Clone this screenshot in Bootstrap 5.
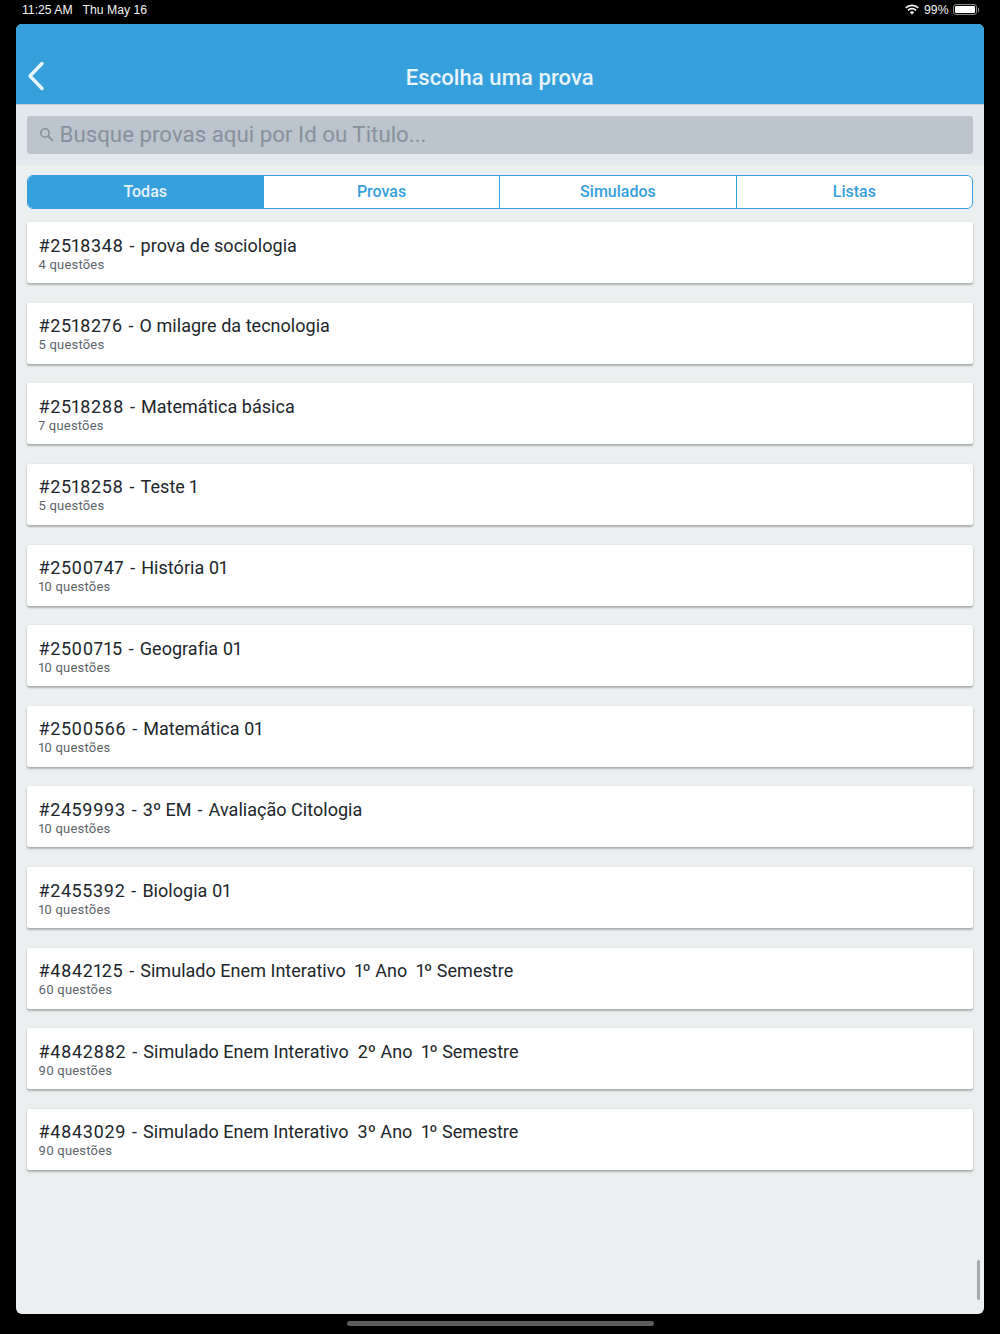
<!DOCTYPE html>
<html lang="pt">
<head>
    <meta charset="UTF-8">
    <title>Escolha uma prova</title>
    <link href="https://cdn.jsdelivr.net/npm/bootstrap@5.3.0/dist/css/bootstrap.min.css" rel="stylesheet">
    <style>
        html, body { height: 100%; }
        body { background: #000; font-family: Roboto, "Liberation Sans", sans-serif; overflow: hidden; font-variant-numeric: proportional-nums; }
        .status-bar { height: 24px; padding: 0 23px 4px 22px; color: #f2f2f2; font-size: 12.2px; font-family: "Liberation Sans", sans-serif; }
        .status-left { gap: 10px; }
        .wifi-glyph { margin-right: 5px; }
        .battery-box { width: 24px; height: 11px; border: 1px solid #8a8a8a; border-radius: 3px; padding: 1px; }
        .battery-fill { background: #fff; height: 100%; border-radius: 1px; }
        .battery-tip { width: 1.5px; height: 4px; background: #8a8a8a; margin-left: 1px; margin-right: -2px; }
        .app-frame { position: relative; height: 1290px; margin: 0 16.5px 0 16px; background: #ebeff0; border-radius: 6px; overflow: hidden; }
        .app-header { height: 81px; background: #36a0dc; border-bottom: 1px solid #c3ccd4; padding: 26px 0 0; color: #fff; }
        .app-title { font-size: 22px; font-weight: 500; color: #e8f3fa; letter-spacing: .1px; }
        .back-slot { position: absolute; left: 11px; top: 37px; line-height: 0; }
        .search-zone { height: 60px; background: #e1e8ee; padding: 11px 10.5px; border-bottom: 1px solid #e4e9ec; }
        .search-field { height: 37.500px; background: #bcc4ce; border-radius: 3px; padding-left: 12px; gap: 6px; color: #87919c; font-size: 22.300px; }
        .tab-strip { margin: 10px 10.5px 13.500px 10.5px; height: 33.500px; border: 1px solid #36a0dc; border-radius: 6px; overflow: hidden; background: #fff; }
        .tab-cell { flex: 1 1 0; color: #36a0dc; font-size: 16px; font-weight: 500; border-left: 1px solid #36a0dc; }
        .tab-cell:first-child { border-left: 0; }
        .tab-cell.is-on { background: #36a0dc; color: #e8f3fa; }
        .exam-list { margin: 0 10.5px; gap: 19.640px; }
        .exam-card { height: 61px; background: #fff; border-radius: 2px; padding: 12.500px 12px 0; box-shadow: 0 2px 2px rgba(0,0,0,.25), 0 0 2px rgba(0,0,0,.1); }
        .exam-title { font-size: 18px; line-height: 22px; color: #20262b; white-space: pre; letter-spacing: .03px; }
        .exam-id { letter-spacing: .6px; }
        .title-sep { word-spacing: 1.500px; }
        .exam-sub { font-size: 13px; line-height: 16px; color: #5c6369; letter-spacing: .2px; }
        .scroll-thumb { position: absolute; right: 4px; top: 1236px; width: 3px; height: 40px; background: #a5a8aa; border-radius: 2px; }
        .home-bar { position: absolute; left: 347px; top: 1321px; width: 307px; height: 5px; background: #5d5d5d; border-radius: 3px; }
    </style>
</head>
<body>
<div class="status-bar d-flex justify-content-between align-items-center">
    <div class="d-flex status-left"><span>11:25 AM</span><span>Thu May 16</span></div>
    <div class="d-flex align-items-center">
        <svg width="14" height="11" viewBox="0 0 14 11" class="wifi-glyph"><path d="M7 10.5 4.9 8.2a3 3 0 0 1 4.2 0zM3.6 6.9 2.5 5.7a6.4 6.4 0 0 1 9 0l-1.1 1.2a4.8 4.8 0 0 0-6.800 0zM1.300 4.500 .2 3.300a9.700 9.700 0 0 1 13.600 0l-1.100 1.200a8.100 8.100 0 0 0-11.400 0z" fill="#fff"/></svg>
        <span class="me-1">99%</span>
        <div class="battery-box"><div class="battery-fill"></div></div>
        <div class="battery-tip"></div>
    </div>
</div>

<div class="app-frame">
    <div class="app-header d-flex justify-content-center align-items-center">
        <span class="app-title">Escolha uma prova</span>
    </div>
    <div class="back-slot">
        <svg width="18" height="30" viewBox="0 0 18 30"><path d="M15 2.500 3 15l12 12.500" fill="none" stroke="#e8f3fa" stroke-width="3.400" stroke-linecap="round" stroke-linejoin="round"/></svg>
    </div>

    <div class="search-zone">
        <div class="search-field d-flex align-items-center">
            <svg width="15" height="15" viewBox="0 0 15 15"><circle cx="6" cy="6" r="4.200" fill="none" stroke="#87919c" stroke-width="1.600"/><path d="m9.200 9.200 4.600 4.600" stroke="#87919c" stroke-width="1.900"/></svg>
            <span>Busque provas aqui por Id ou Titulo...</span>
        </div>
    </div>

    <div class="tab-strip d-flex">
        <div class="tab-cell is-on d-flex align-items-center justify-content-center">Todas</div>
        <div class="tab-cell d-flex align-items-center justify-content-center">Provas</div>
        <div class="tab-cell d-flex align-items-center justify-content-center">Simulados</div>
        <div class="tab-cell d-flex align-items-center justify-content-center">Listas</div>
    </div>

    <div class="exam-list d-flex flex-column">
        <div class="exam-card"><div class="exam-title"><span class="exam-id">#2518348</span><span class="title-sep"> - </span>prova de sociologia</div><div class="exam-sub">4 questões</div></div>
        <div class="exam-card"><div class="exam-title"><span class="exam-id">#2518276</span><span class="title-sep"> - </span>O milagre da tecnologia</div><div class="exam-sub">5 questões</div></div>
        <div class="exam-card"><div class="exam-title"><span class="exam-id">#2518288</span><span class="title-sep"> - </span>Matemática básica</div><div class="exam-sub">7 questões</div></div>
        <div class="exam-card"><div class="exam-title"><span class="exam-id">#2518258</span><span class="title-sep"> - </span>Teste 1</div><div class="exam-sub">5 questões</div></div>
        <div class="exam-card"><div class="exam-title"><span class="exam-id">#2500747</span><span class="title-sep"> - </span>História 01</div><div class="exam-sub">10 questões</div></div>
        <div class="exam-card"><div class="exam-title"><span class="exam-id">#2500715</span><span class="title-sep"> - </span>Geografia 01</div><div class="exam-sub">10 questões</div></div>
        <div class="exam-card"><div class="exam-title"><span class="exam-id">#2500566</span><span class="title-sep"> - </span>Matemática 01</div><div class="exam-sub">10 questões</div></div>
        <div class="exam-card"><div class="exam-title"><span class="exam-id">#2459993</span><span class="title-sep"> - </span>3º EM<span class="title-sep"> - </span>Avaliação Citologia</div><div class="exam-sub">10 questões</div></div>
        <div class="exam-card"><div class="exam-title"><span class="exam-id">#2455392</span><span class="title-sep"> - </span>Biologia 01</div><div class="exam-sub">10 questões</div></div>
        <div class="exam-card"><div class="exam-title"><span class="exam-id">#4842125</span><span class="title-sep"> - </span>Simulado Enem Interativo  1º Ano  1º Semestre</div><div class="exam-sub">60 questões</div></div>
        <div class="exam-card"><div class="exam-title"><span class="exam-id">#4842882</span><span class="title-sep"> - </span>Simulado Enem Interativo  2º Ano  1º Semestre</div><div class="exam-sub">90 questões</div></div>
        <div class="exam-card"><div class="exam-title"><span class="exam-id">#4843029</span><span class="title-sep"> - </span>Simulado Enem Interativo  3º Ano  1º Semestre</div><div class="exam-sub">90 questões</div></div>
    </div>
    <div class="scroll-thumb"></div>
</div>
<div class="home-bar"></div>
<script src="https://cdn.jsdelivr.net/npm/bootstrap@5.3.0/dist/js/bootstrap.bundle.min.js"></script>
</body>
</html>
